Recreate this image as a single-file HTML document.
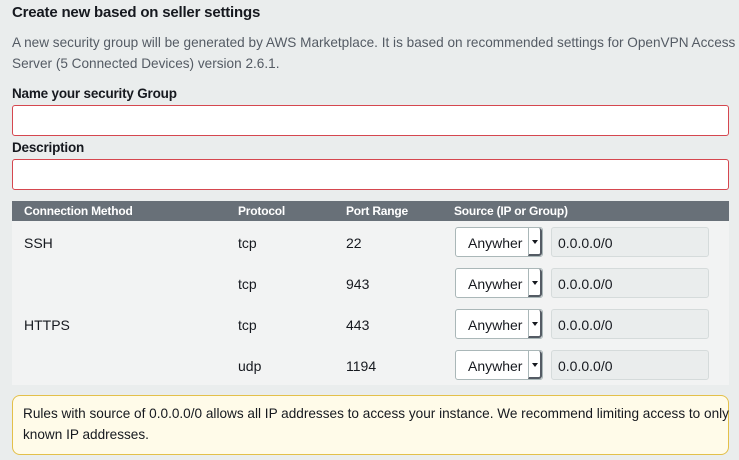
<!DOCTYPE html>
<html><head><style>
body{margin:0;width:739px;height:460px;background:#eaeded;font-family:"Liberation Sans",sans-serif;color:#16191f;position:relative;overflow:hidden}
.a{position:absolute;white-space:nowrap}
.h{font-weight:bold;font-size:15px;letter-spacing:-0.2px}
.p{font-size:13.6px;color:#545b64}
.lbl{font-weight:bold;font-size:13.5px;letter-spacing:-0.2px}
.inp{position:absolute;left:12px;width:715px;height:29px;background:#fff;border:1px solid #d5474f;border-radius:3px;box-sizing:content-box}
.th{position:absolute;left:12px;top:201px;width:717px;height:20px;background:#687078}
.th span{position:absolute;top:3px;color:#fff;font-weight:bold;font-size:12px;letter-spacing:-0.2px}
.tb{position:absolute;left:12px;top:221px;width:717px;height:164px;background:#f2f3f3}
.c{position:absolute;font-size:14px;color:#16191f}
.sel{position:absolute;left:455px;width:88px;height:30px;background:#fff;border:1px solid #aab7b8;border-radius:3px;box-sizing:border-box}
.sel span{position:absolute;left:12px;top:7px;font-size:14px}
.sel i{position:absolute;right:0;top:0;width:14px;height:28px;border-left:1px solid #aab7b8;border-right:2px solid #545b64;border-bottom:2px solid #545b64;box-sizing:border-box;border-radius:0 3px 3px 0}
.sel i:after{content:"";position:absolute;left:3px;top:12px;border:3px solid transparent;border-top:4px solid #16191f}
.ip{position:absolute;left:551px;width:158px;height:30px;background:#eaeded;border:1px solid #d5dbdb;border-radius:3px;box-sizing:border-box}
.ip span{position:absolute;left:6px;top:7px;font-size:14px;color:#16191f}
.al{position:absolute;left:12px;top:395px;width:717px;height:60px;background:#fffbe9;border:1px solid #e3c04a;border-radius:8px;box-sizing:border-box}
</style></head><body>
<div class="a h" style="left:12px;top:4px">Create new based on seller settings</div>
<div class="a p" style="left:12px;top:35px">A new security group will be generated by AWS Marketplace. It is based on recommended settings for OpenVPN Access</div>
<div class="a p" style="left:12px;top:56px">Server (5 Connected Devices) version 2.6.1.</div>
<div class="a lbl" style="left:12px;top:86px">Name your security Group</div>
<div class="inp" style="top:105px"></div>
<div class="a lbl" style="left:12px;top:140px">Description</div>
<div class="inp" style="top:159px"></div>
<div class="th"><span style="left:12px">Connection Method</span><span style="left:226px">Protocol</span><span style="left:334px">Port Range</span><span style="left:442px">Source (IP or Group)</span></div>
<div class="tb"></div>
<div class="c" style="left:24px;top:235px">SSH</div><div class="c" style="left:238px;top:235px">tcp</div><div class="c" style="left:346px;top:235px">22</div>
<div class="c" style="left:238px;top:276px">tcp</div><div class="c" style="left:346px;top:276px">943</div>
<div class="c" style="left:24px;top:317px">HTTPS</div><div class="c" style="left:238px;top:317px">tcp</div><div class="c" style="left:346px;top:317px">443</div>
<div class="c" style="left:238px;top:358px">udp</div><div class="c" style="left:346px;top:358px">1194</div>
<div class="sel" style="top:227px"><span>Anywher</span><i></i></div><div class="ip" style="top:227px"><span>0.0.0.0/0</span></div>
<div class="sel" style="top:268px"><span>Anywher</span><i></i></div><div class="ip" style="top:268px"><span>0.0.0.0/0</span></div>
<div class="sel" style="top:309px"><span>Anywher</span><i></i></div><div class="ip" style="top:309px"><span>0.0.0.0/0</span></div>
<div class="sel" style="top:350px"><span>Anywher</span><i></i></div><div class="ip" style="top:350px"><span>0.0.0.0/0</span></div>
<div class="al"></div>
<div class="a c" style="left:23px;top:406px;font-size:13.6px">Rules with source of 0.0.0.0/0 allows all IP addresses to access your instance. We recommend limiting access to only</div>
<div class="a c" style="left:23px;top:427px;font-size:13.6px">known IP addresses.</div>
</body></html>
